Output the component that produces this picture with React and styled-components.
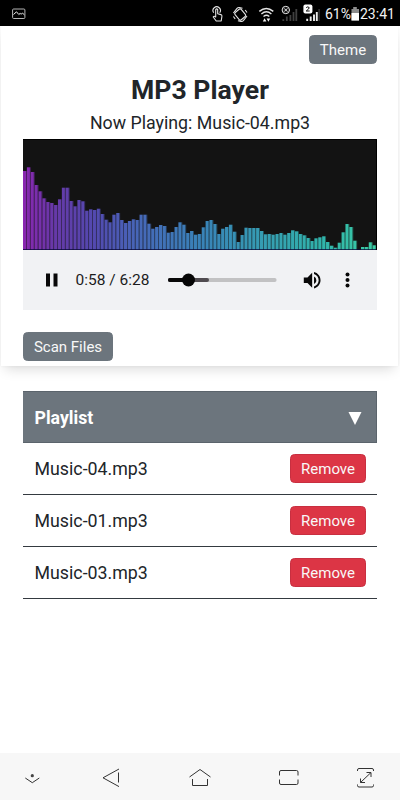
import React, { useState } from 'react';
import styled, { createGlobalStyle } from 'styled-components';

const colors = {
  dark: '#212529',
  secondary: '#6c757d',
  danger: '#dc3545',
  controls: '#f1f2f4',
  nav: '#f7f7f7',
};

const GlobalStyle = createGlobalStyle`
  * {
    box-sizing: border-box;
  }
  body {
    margin: 0;
    background: #fff;
    color: ${colors.dark};
    font-family: Roboto, 'Liberation Sans', sans-serif;
  }
`;

const Screen = styled.div`
  display: flex;
  flex-direction: column;
  width: 400px;
  height: 800px;
  overflow: hidden;
`;

const StatusBar = styled.header`
  display: flex;
  flex: none;
  align-items: center;
  height: 26px;
  padding: 1px 7px 0 12px;
  background: #000;
  color: #f2f2f2;
  font-size: 14px;
  line-height: 26px;
`;

const StatusIcons = styled.div`
  display: flex;
  align-items: center;
  margin-left: auto;
  svg {
    display: block;
  }
`;

const StatusText = styled.span`
  width: ${(props) => props.$width}px;
  white-space: nowrap;
`;

const Card = styled.section`
  display: flex;
  flex: none;
  flex-direction: column;
  height: 340px;
  margin: 0 2px 0 1px;
  padding: 9px 21px 0 22px;
  box-shadow: 0 7px 12px -4px rgba(0, 0, 0, 0.15), 0 0 3px rgba(0, 0, 0, 0.05);
`;

const Button = styled.button`
  display: block;
  flex: none;
  width: ${(props) => props.$width}px;
  height: 29px;
  padding: 0;
  border: 1px solid ${(props) => (props.$danger ? '#c82f40' : colors.secondary)};
  border-radius: 4.5px;
  background: ${(props) => (props.$danger ? colors.danger : colors.secondary)};
  color: #f8f8f8;
  font-family: inherit;
  font-size: 15px;
  line-height: 26px;
  text-align: center;
`;

const ThemeButton = styled(Button)`
  align-self: flex-end;
`;

const Title = styled.h1`
  margin: 10px 0 0;
  font-size: 26.6px;
  font-weight: 700;
  line-height: 32px;
  text-align: center;
`;

const NowPlaying = styled.p`
  margin: 6px 0 0;
  font-size: 17.8px;
  line-height: 22px;
  height: 27px;
  text-align: center;
  white-space: nowrap;
`;

const Spectrum = styled.svg`
  display: block;
  flex: none;
  width: 354px;
  height: 111px;
  background: #131313;
`;

const Controls = styled.div`
  display: flex;
  flex: none;
  align-items: center;
  height: 60px;
  margin-bottom: 22px;
  padding: 0 27px 0 18px;
  background: ${colors.controls};
  svg {
    display: block;
    flex: none;
  }
`;

const Time = styled.span`
  width: 93px;
  padding-left: 11.5px;
  color: #1c1c1c;
  font-size: 15.5px;
  white-space: nowrap;
`;

const VolumeIcon = styled.svg`
  margin-left: auto;
`;

const MenuIcon = styled.svg`
  margin-left: 21px;
`;

const Playlist = styled.section`
  flex: none;
  margin: 25px 23px 0;
`;

const PlaylistHeader = styled.div`
  display: flex;
  align-items: center;
  justify-content: space-between;
  height: 52px;
  padding: 1px 14px 0 11.5px;
  border: 1px solid #5b646c;
  border-width: 1px 1px 1px 0;
  background: ${colors.secondary};
  color: #fff;
  font-size: 17.7px;
  font-weight: 700;
`;

const Track = styled.div`
  display: flex;
  align-items: center;
  justify-content: space-between;
  height: 52px;
  padding: 0 11px 0 11.5px;
  border-bottom: 1px solid #343a40;
  font-size: 17.8px;
`;

const NavBar = styled.nav`
  display: grid;
  flex: none;
  grid-template-columns: 79px 89px 89px 77px 24px;
  align-items: center;
  height: 47px;
  margin-top: auto;
  padding-left: 20px;
  background: ${colors.nav};
  svg {
    display: block;
  }
`;

// Hauteur de chaque barre du spectre, en pixels
const levels = [
  79, 82.7, 78, 65, 58.7, 51.7, 48, 47, 45, 50.7, 62.3, 62.3, 49, 43.7, 50,
  48.7, 39.3, 40.7, 40, 41.3, 36, 30.3, 27.7, 35.3, 37, 30, 27, 29, 30.7, 30,
  35.3, 35.3, 26.3, 21.3, 23, 25, 24, 17.3, 18, 23, 27.7, 25.3, 17, 19, 15.3,
  16, 22.7, 29, 30, 26, 16, 21.3, 23, 25.3, 18.3, 8, 15, 22.3, 22, 22, 22, 19,
  15.7, 16, 15.3, 16, 17, 15.3, 17, 19.7, 18.7, 16, 14.7, 12, 9, 11.7, 12.7,
  13.7, 8, 4.3, 2.3, 7.3, 17.7, 26, 23, 9.3, 0, 3, 3, 7.7, 4.7, 5.7,
];
const STEP = 3.885;

const tracks = ['Music-04.mp3', 'Music-01.mp3', 'Music-03.mp3'];

function Visualizer() {
  return (
    <Spectrum viewBox="0 0 354 111">
      <defs>
        <linearGradient id="hue" gradientUnits="userSpaceOnUse" x1="0" x2="354" y1="0" y2="0">
          <stop offset="0" stopColor="#8a26b0" />
          <stop offset="0.09" stopColor="#6639a8" />
          <stop offset="0.2" stopColor="#5349b0" />
          <stop offset="0.33" stopColor="#4668b8" />
          <stop offset="0.5" stopColor="#3982b8" />
          <stop offset="0.7" stopColor="#35a0b2" />
          <stop offset="0.85" stopColor="#30b4ab" />
          <stop offset="1" stopColor="#3bcda4" />
        </linearGradient>
      </defs>
      {levels.map((h, i) => (
        <rect key={i} x={i * STEP} y={111 - h} width={STEP - 0.85} height={h} fill="url(#hue)" />
      ))}
      {levels.map((h, i) => (
        <rect
          key={`edge-${i}`}
          x={i * STEP + STEP - 0.85}
          y={111 - h}
          width="0.85"
          height={h}
          fill="url(#hue)"
          opacity="0.5"
        />
      ))}
      <path d="M0 110.5H354" stroke="#08083a" strokeOpacity="0.75" />
      <path d="M0 .5H354M353.5 0V111" stroke="#000" />
    </Spectrum>
  );
}

function StatusBarIcons() {
  return (
    <svg width="117" height="26" viewBox="208 0 117 26" fill="none" stroke="#e4e4e4">
      <g strokeWidth="1.1" strokeLinejoin="round">
        <path d="M213.7 11.7a3.7 3.7 0 1 1 6 0" />
        <path d="M215.7 15V8.6q1-1.4 2 0v4.2l3.2.8q1.3.5 1 1.8l-.7 4.6h-5l-3-4q.8-1.5 2.5 0z" />
      </g>
      <g strokeWidth="1.1">
        <rect x="236.2" y="8.8" width="8" height="9.4" rx="1.5" transform="rotate(-40 240.2 13.5)" />
        <path d="M233.4 12l3.6-4.6q1-1 2.3-.8l3.200.6M247 15l-3.600 4.600q-1 1-2.300.8l-3.200-.6M245.200 9l1.800 2.500M235.200 18l-1.800-2.500" />
      </g>
      <g strokeWidth="1.4">
        <path d="M259.300 10.400q7-6 14 0M261.400 13q5-4.400 10 0M263.500 15.500q3-2.400 5.800 0" />
        <path d="M262.800 20.500h3.600l-1.800-3.200zM266.600 17.600h3.600l-1.800 3.200z" fill="#f5f5f5" stroke="none" />
      </g>
      <g stroke="#404040" strokeWidth="1.8">
        <path d="M283.300 20V18.300M286.800 20V15.500M290.400 20V14M293.500 20V11M296.300 20V8" />
      </g>
      <circle cx="285.800" cy="9" r="3.700" fill="#161616" stroke="#e8e8e8" />
      <path d="M284.200 7.400l3.200 3.200M287.400 7.400l-3.200 3.200" />
      <g strokeWidth="1.900" stroke="#eee">
        <path d="M307.200 20V17.700M310.700 20V15.500M314 20V13.500M316.800 20V11" />
        <path d="M319.100 20V8" stroke="#3a3a3a" strokeWidth="1.300" />
      </g>
      <rect x="303.400" y="3.600" width="9" height="9" rx="2" fill="#fff" stroke="none" />
      <path d="M306.200 6.600q1.700-1.500 3 0 .3 1-3 3.400h3.500" stroke="#111" />
    </svg>
  );
}

function App() {
  const [open, setOpen] = useState(true);

  return (
    <>
      <GlobalStyle />
      <Screen>
        <StatusBar>
          <svg width="14" height="12" viewBox="0 0 14 12" fill="none" stroke="#b5b5b5">
            <rect x=".6" y="1" width="12.3" height="9.5" rx="1" />
            <path d="M1.5 6.5l3-2.7 2.3 2.7 1.4-1.2 1 1 1.2-1.3 2 1.8" stroke="#eee" />
          </svg>
          <StatusIcons>
            <StatusBarIcons />
            <StatusText $width={25}>61%</StatusText>
            <svg width="10" height="14" viewBox="0 0 10 14">
              <path d="M3.2 0h3.6v2H9v11.5H1.500V2h1.700z" fill="#8d8d8d" />
              <path d="M1.500 6H9v7.500H1.500z" fill="#fff" />
            </svg>
            <StatusText $width={33}>23:41</StatusText>
          </StatusIcons>
        </StatusBar>

        <Card>
          <ThemeButton $width={68}>Theme</ThemeButton>
          <Title>MP3 Player</Title>
          <NowPlaying>Now Playing: Music-04.mp3</NowPlaying>
          <Visualizer />
          <Controls>
            <svg width="23" height="24" viewBox="0 0 23 24">
              <path d="M5 5.5h4v13H5zM12.5 5.5h4v13h-4z" fill="#080808" />
            </svg>
            <Time>0:58 / 6:28</Time>
            <svg width="121" height="16" viewBox="0 0 121 16" strokeWidth="4" strokeLinecap="round">
              <path d="M13 8H117.6" stroke="#c2c2c3" />
              <path d="M13 8H50" stroke="#504c50" />
              <path d="M13 8H32" stroke="#080808" />
              <circle cx="31.5" cy="8" r="6.5" fill="#060606" />
            </svg>
            <VolumeIcon width="24" height="24" viewBox="0 0 24 24">
              <path
                d="M3 9v6h4l5 5V4L7 9H3zm13.500 3A4.500 4.500 0 0 0 14 7.970v8.050c1.480-.73 2.500-2.250 2.500-4.020zM14 3.230v2.060c2.890.86 5 3.540 5 6.710s-2.110 5.850-5 6.710v2.060c4.010-.91 7-4.490 7-8.770s-2.990-7.860-7-8.770z"
                fill="#080808"
                transform="translate(1 1.100) scale(.93)"
              />
            </VolumeIcon>
            <MenuIcon width="5" height="18" viewBox="0 0 5 18" fill="#080808">
              <circle cx="2.5" cy="3.5" r="2" />
              <circle cx="2.5" cy="9" r="2" />
              <circle cx="2.5" cy="14.5" r="2" />
            </MenuIcon>
          </Controls>
          <Button $width={90}>Scan Files</Button>
        </Card>

        <Playlist>
          <PlaylistHeader onClick={() => setOpen(!open)}>
            Playlist
            <svg width="14" height="14" viewBox="0 0 14 14">
              <path d="M.5 1H13.500L7 14z" fill="#fff" />
            </svg>
          </PlaylistHeader>
          {open &&
            tracks.map((track) => (
              <Track key={track}>
                {track}
                <Button $width={76} $danger>
                  Remove
                </Button>
              </Track>
            ))}
        </Playlist>

        <NavBar>
          <svg width="24" height="24" viewBox="20 764 24 24" fill="none" stroke="#333">
            <circle cx="32.300" cy="774.700" r="1.600" fill="#444" stroke="none" />
            <path d="M25.300 777l7 4.700 7-4.700" />
          </svg>
          <svg width="24" height="24" viewBox="99 764 24 24" fill="none" stroke="#333">
            <path d="M119 768l-16 8.800 16 8.800M118.500 771.500v10" />
          </svg>
          <svg width="24" height="24" viewBox="188 764 24 24" fill="none" stroke="#333">
            <path d="M189.500 776l10.500-7.500 10.500 7.500M192.500 778v6.500h15V778" />
          </svg>
          <svg width="24" height="24" viewBox="277 764 24 24" fill="none" stroke="#333">
            <path d="M279.500 774.500V771q0-1.500 1.500-1.500h15.500q1.500 0 1.500 1.500v3.500M279.500 778.500v3.500q0 1.500 1.500 1.500h15.500q1.500 0 1.500-1.500v-3.500" />
          </svg>
          <svg width="24" height="24" viewBox="354 764 24 24" fill="none" stroke="#333">
            <path d="M357.500 770v-1q0-1.500 1.500-1.500h13q1.500 0 1.500 1.500v1M357.500 783.500v1q0 1.500 1.500 1.500h13q1.500 0 1.500-1.500v-1" />
            <path d="M360.500 781.500l10.500-10M366.500 771.500h4.500v4.500M360.500 777.500v4h4.500" />
          </svg>
        </NavBar>
      </Screen>
    </>
  );
}

export default App;
